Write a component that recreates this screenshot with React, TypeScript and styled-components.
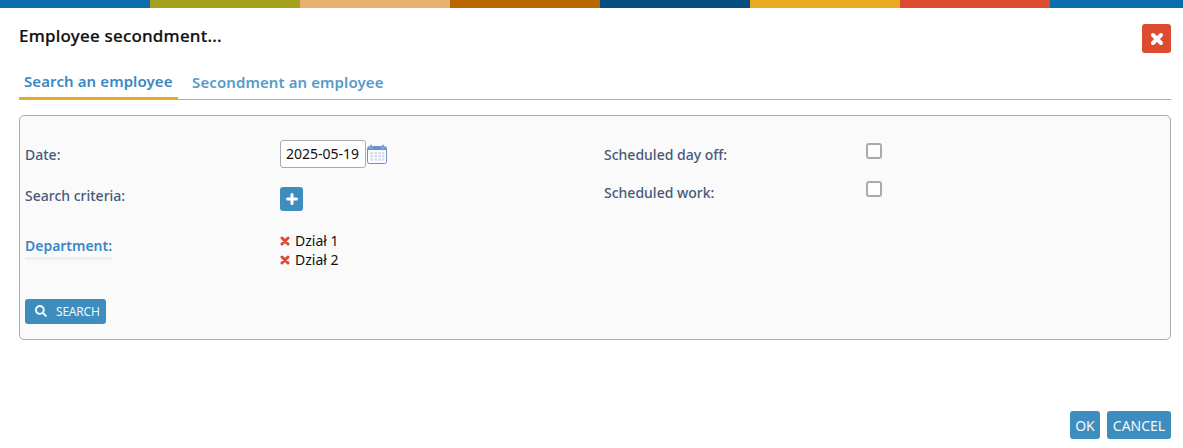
import React from 'react';
import styled, { createGlobalStyle } from 'styled-components';
import { FaSearch } from 'react-icons/fa';

const Global = createGlobalStyle`
  html, body { margin: 0; padding: 0; background: #fff; }
  body { font-family: 'Noto Sans', sans-serif; font-size: 14px; color: #111; }
  * { box-sizing: border-box; }
`;

const Dialog = styled.div`
  width: 1183px; height: 448px; display: flex; flex-direction: column; background: #fff; overflow: hidden;
`;

const ColorBar = styled.div`
  display: flex; height: 8px; flex: none;
`;

const ColorSegment = styled.div<{ $color: string; $grow?: boolean }>`
  background: ${p => p.$color};
  ${p => (p.$grow ? 'flex: 1;' : 'width: 150px;')}
`;

const Body = styled.div`
  flex: 1; display: flex; flex-direction: column; padding: 16px 12px 9px 19px;
`;

const TitleRow = styled.div`
  display: flex; justify-content: space-between; align-items: flex-start; height: 29px;
`;

const Title = styled.div`
  font-size: 17px; font-weight: 500; line-height: 24px; color: #111; letter-spacing: 0.2px; -webkit-text-stroke: 0.2px #111;
`;

const CloseButton = styled.button`
  width: 29px; height: 29px; padding: 0; border: none; border-radius: 3px; background: #dc4a2f; color: #fff;
  display: flex; align-items: center; justify-content: center;
`;

const Tabs = styled.div`
  display: flex; margin-top: 15px; height: 32px; border-bottom: 1px solid #e6ab22;
`;

const Tab = styled.div<{ $active?: boolean }>`
  font-size: 15px; font-weight: 600; line-height: 21px; height: 32px; padding: ${p => (p.$active ? '3px 5px 0 5px' : '4px 0 0 14px')};
  letter-spacing: 0.1px;
  color: ${p => (p.$active ? '#3a87c4' : '#569bc8')};
  ${p => p.$active && 'border-bottom: 3px solid #e6ab22;'}
  ${p => !p.$active && 'margin-left: 0.5px;'}
`;

const Panel = styled.div`
  margin-top: 15px; height: 225px; border: 1px solid #aaa; border-radius: 5px; background: #fafafa;
  padding: 24px 5px 0 5px; display: grid; grid-template-columns: 579px 1fr;
`;

const LeftColumn = styled.div`
  display: grid; grid-template-columns: 255px 1fr; grid-template-rows: 47px 49px 63px auto;
`;

const RightColumn = styled.div`
  display: flex; flex-direction: column; gap: 18px;
`;

const Label = styled.div<{ $link?: boolean }>`
  font-size: 14px; font-weight: 500; line-height: 19px; color: ${p => (p.$link ? '#3a87c4' : '#47597a')};
  ${p => p.$link && 'font-weight: 600; border-bottom: 3px solid #eee; width: fit-content; height: 24px; letter-spacing: -0.02px;'}
`;

const DateLabel = styled(Label)`
  padding-top: 5px;
`;

const CriteriaLabel = styled(Label)`
  margin-top: -1px;
`;

const DateCell = styled.div`
  display: flex; align-items: flex-start; gap: 1px;
`;

const DateBox = styled.div`
  width: 86px; height: 28px; border: 1px solid #aaa; border-radius: 3px; background: #fff;
  font-size: 14px; line-height: 26px; padding-left: 5px; color: #111;
`;

const CalendarIcon = styled.svg`
  width: 20px; height: 20px; margin-top: 4px;
`;

const AddButton = styled.button`
  width: 23px; height: 24px; padding: 0; border: none; border-radius: 3px; background: #3d8dbf; color: #fff;
  display: flex; align-items: center; justify-content: center;
`;

const RightRow = styled.div`
  display: flex; align-items: flex-start; height: 20px;
`;

const RightLabel = styled(Label)`
  width: 262px; padding-top: 5px;
`;

const Check = styled.div`
  width: 16px; height: 16px; border: 2px solid #aaa; border-radius: 3px; background: #fff; margin-top: 3px;
`;

const DeptList = styled.div`
  display: flex; flex-direction: column; margin-top: -5px;
`;

const DeptItem = styled.div`
  display: flex; align-items: center; gap: 5px; height: 19px; font-size: 14px; color: #111;
`;

const RemoveIcon = styled.svg`
  width: 10px; height: 10px; color: #dc4a2f; margin-top: 1px;
`;

const SearchButton = styled.button`
  width: 81px; height: 25px; padding: 0 0 1px 10px; border: none; border-radius: 3px; background: #3d8dbf; color: #f2f7fa;
  display: flex; align-items: center; gap: 9px; font-family: 'Noto Sans', sans-serif; font-size: 12px; letter-spacing: -0.2px;
  grid-column: 1;
`;

const Footer = styled.div`
  margin-top: auto; display: flex; justify-content: flex-end; gap: 7px;
`;

const FooterButton = styled.button<{ $width: number }>`
  height: 28px; width: ${p => p.$width}px; padding: 0; border: none; border-radius: 3px; background: #3d8dbf; color: #f5f9fb;
  font-family: 'Noto Sans', sans-serif; font-size: 14px;
`;

const segments = ['#0a6eab', '#a6a11c', '#e7b06f', '#b96500', '#054f80', '#e8ab1f', '#dc4a2f'];

const cellXs = [3.5, 7.5, 11.5, 15];
const cellYs = [8, 11, 14.5];

function CrossGlyph() {
  return (
    <svg width="14" height="14" viewBox="0 0 14 14">
      <path d="M3 3L11 11M11 3L3 11" stroke="currentColor" strokeWidth="4" strokeLinecap="round" fill="none" />
    </svg>
  );
}

function PlusGlyph() {
  return (
    <svg width="12" height="12" viewBox="0 0 12 12">
      <path d="M6 1.5V10.5M1.5 6H10.5" stroke="currentColor" strokeWidth="3" strokeLinecap="round" fill="none" />
    </svg>
  );
}

function RemoveGlyph() {
  return (
    <RemoveIcon viewBox="0 0 10 10">
      <path d="M2 2L8 8M8 2L2 8" stroke="currentColor" strokeWidth="3" strokeLinecap="round" fill="none" />
    </RemoveIcon>
  );
}

export default function App() {
  return (
    <Dialog>
      <Global />
      <ColorBar>
        {segments.map(c => <ColorSegment key={c} $color={c} />)}
        <ColorSegment $color="#0a6eab" $grow />
      </ColorBar>
      <Body>
        <TitleRow>
          <Title>Employee secondment...</Title>
          <CloseButton><CrossGlyph /></CloseButton>
        </TitleRow>
        <Tabs>
          <Tab $active>Search an employee</Tab>
          <Tab>Secondment an employee</Tab>
        </Tabs>
        <Panel>
          <LeftColumn>
            <DateLabel>Date:</DateLabel>
            <DateCell>
              <DateBox>2025-05-19</DateBox>
              <CalendarIcon viewBox="0 0 20 20">
                <rect x="0.5" y="2.5" width="19" height="17" rx="2" fill="#fdfdff" stroke="#6f8fcb" />
                <path d="M1 6V4Q1 3 2 3H18Q19 3 19 4V6Z" fill="#6f8fcb" />
                <rect x="3" y="0.5" width="2" height="4" rx="1" fill="#5f82c4" stroke="#fff" strokeWidth="0.4" />
                <rect x="15" y="0.5" width="2" height="4" rx="1" fill="#5f82c4" stroke="#fff" strokeWidth="0.4" />
                {cellYs.map(y => cellXs.map(x => (
                  <rect key={`${x}-${y}`} x={x} y={y} width="2.4" height="2.2" fill="#cdd8ef" />
                )))}
              </CalendarIcon>
            </DateCell>
            <CriteriaLabel>Search criteria:</CriteriaLabel>
            <div><AddButton><PlusGlyph /></AddButton></div>
            <Label $link>Department:</Label>
            <DeptList>
              <DeptItem><RemoveGlyph />Dział 1</DeptItem>
              <DeptItem><RemoveGlyph />Dział 2</DeptItem>
            </DeptList>
            <SearchButton><FaSearch />SEARCH</SearchButton>
          </LeftColumn>
          <RightColumn>
            <RightRow>
              <RightLabel>Scheduled day off:</RightLabel>
              <Check />
            </RightRow>
            <RightRow>
              <RightLabel>Scheduled work:</RightLabel>
              <Check />
            </RightRow>
          </RightColumn>
        </Panel>
        <Footer>
          <FooterButton $width={30}>OK</FooterButton>
          <FooterButton $width={64}>CANCEL</FooterButton>
        </Footer>
      </Body>
    </Dialog>
  );
}
